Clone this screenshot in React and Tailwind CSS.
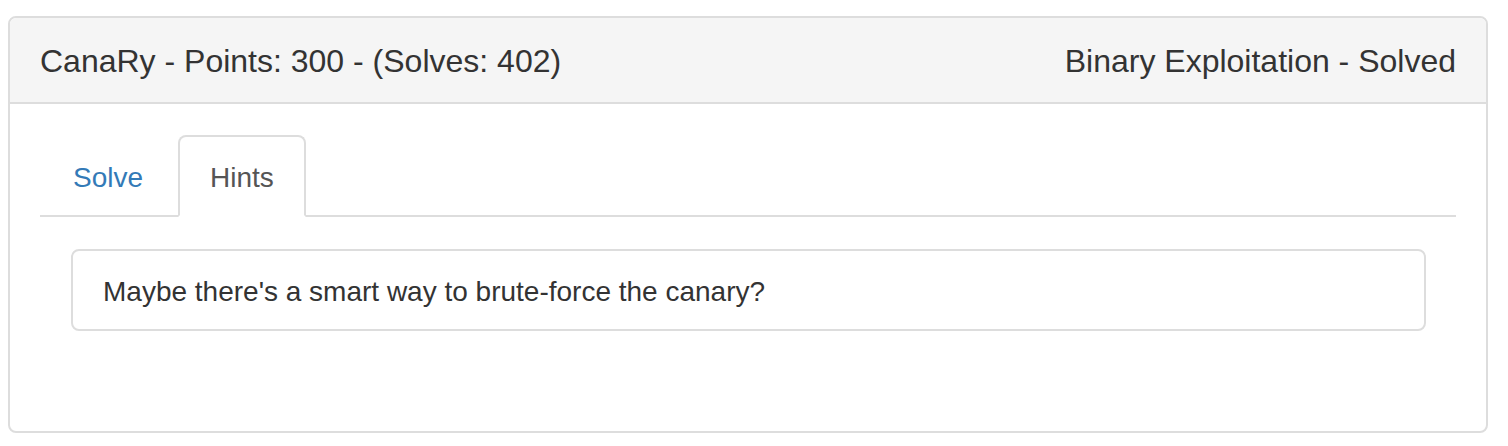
import React from "react";

export default function App() {
  return (
    <div className="min-h-screen bg-white pl-[8px] pr-[20px] pt-[16px] font-['Liberation_Sans',Arial,sans-serif] text-[#333]">
      <div className="w-[1480px] rounded-[8px] border-2 border-[#ddd] bg-white">
        <div className="flex h-[86px] items-center justify-between rounded-t-[6px] border-b-2 border-[#ddd] bg-[#f5f5f5] px-[30px] pt-[2px] text-[32px] leading-[36px]">
          <span>CanaRy - Points: 300 - (Solves: 402)</span>
          <span>Binary Exploitation - Solved</span>
        </div>

        <div className="px-[30px] pb-[100px] pt-[31px]">
          <ul className="flex border-b-2 border-[#ddd] text-[28px] leading-[40px]">
            <li className="-mb-[2px] mr-[4px]">
              <a href="#" className="block border-2 border-transparent pb-[17px] pl-[31px] pr-[29px] pt-[21px] text-[#337ab7]">
                Solve
              </a>
            </li>
            <li className="-mb-[2px]">
              <a href="#" className="block rounded-t-[8px] border-2 border-[#ddd] border-b-white bg-white px-[30px] pb-[17px] pt-[21px] text-[#555]">
                Hints
              </a>
            </li>
          </ul>

          <div className="ml-[31px] mr-[30px] mt-[32px] rounded-[8px] border-2 border-[#ddd] px-[30px] pb-[17px] pt-[21px] text-[28px] leading-[40px]">
            Maybe there's a smart way to brute-force the canary?
          </div>
        </div>
      </div>
    </div>
  );
}
